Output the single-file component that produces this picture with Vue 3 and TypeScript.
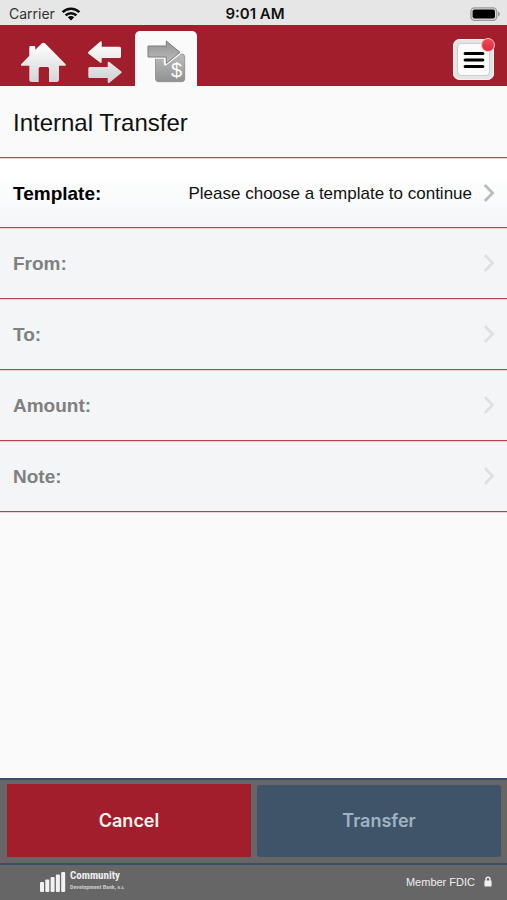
<script setup lang="ts">
interface Field {
  id: string
  label: string
  value: string
  enabled: boolean
}

const fields: Field[] = [
  { id: 'template', label: 'Template:', value: 'Please choose a template to continue', enabled: true },
  { id: 'from', label: 'From:', value: '', enabled: false },
  { id: 'to', label: 'To:', value: '', enabled: false },
  { id: 'amount', label: 'Amount:', value: '', enabled: false },
  { id: 'note', label: 'Note:', value: '', enabled: false },
]
</script>

<template>
  <div class="screen">
    <div class="status">
      <div class="carrier">
        <span>Carrier</span>
        <svg width="20" height="14" viewBox="0 0 20 14" aria-hidden="true">
          <g fill="none" stroke="#0a0a0a" stroke-width="2.5">
            <path d="M1.6 5.2a12 12 0 0 1 16.8 0" />
            <path d="M4.6 8.4a7.7 7.7 0 0 1 10.8 0" />
          </g>
          <path d="M10 13.6 6.8 10.3a4.6 4.6 0 0 1 6.4 0z" fill="#0a0a0a" />
        </svg>
      </div>
      <div class="time">9:01 AM</div>
      <div class="battery">
        <svg width="31" height="14" viewBox="0 0 31 14" aria-hidden="true">
          <rect x="0.9" y="0.9" width="25.8" height="12.4" rx="3.6" fill="#dcdcdc" stroke="#9b9b9b" stroke-width="1.3" />
          <rect x="2.6" y="2.6" width="22.4" height="9" rx="2" fill="#000" />
          <path d="M28 4.8c2.6.6 2.6 4 0 4.6z" fill="#9b9b9b" />
        </svg>
      </div>
    </div>

    <header class="topbar">
      <nav class="tabs">
        <button class="tab" type="button" aria-label="Home">
          <svg width="61" height="55" viewBox="0 0 61 55">
            <defs>
              <linearGradient id="homeFill" x1="0" y1="0" x2="0" y2="1">
                <stop offset="0" stop-color="#fff" />
                <stop offset="1" stop-color="#d4d5d6" />
              </linearGradient>
            </defs>
            <path
              d="M28.6 12.6q1.8-1.6 3.6 0l20.2 20.3q1.4 1.8-.8 1.8H46v13.8q0 2.5-2.5 2.5H36V37.5q0-1.5-1.5-1.5h-7.300q-1.500 0-1.500 1.500V51h-6.900q-2.500 0-2.500-2.500V34.700H9.200q-2.200 0-.8-1.800l7.900-8.100v-8.600q0-1.200 1.200-1.200h3.600q1.200 0 1.200 1.200v2.600z"
              fill="url(#homeFill)"
            />
          </svg>
        </button>
        <button class="tab" type="button" aria-label="Transfers">
          <svg width="61" height="55" viewBox="0 0 61 55">
            <defs>
              <linearGradient id="swapFill" gradientUnits="userSpaceOnUse" x1="0" y1="10" x2="0" y2="52">
                <stop offset="0" stop-color="#fff" />
                <stop offset="1" stop-color="#d0d1d2" />
              </linearGradient>
            </defs>
            <g fill="url(#swapFill)">
              <path d="M14.200 20.900 26 10.700q1.700-1 1.700.8v4.200h17.800q1.500 0 1.500 1.500v8.300q0 1.500-1.500 1.500H27.700v3.800q0 1.800-1.700.8L14.200 22.400q-.8-.7 0-1.500z" />
              <path d="M47.300 40.600 35.400 31q-1.700-1-1.700.8V36H15.800q-1.500 0-1.500 1.500v8q0 1.500 1.500 1.500h17.900v4q0 1.800 1.700.8l11.900-9.700q.8-.7 0-1.500z" />
            </g>
          </svg>
        </button>
        <button class="tab active" type="button" aria-label="Internal transfer" aria-current="page">
          <svg width="62" height="55" viewBox="0 0 62 55">
            <defs>
              <linearGradient id="cardFill" x1="0" y1="0" x2="0" y2="1">
                <stop offset="0" stop-color="#bcbcbc" />
                <stop offset="1" stop-color="#919191" />
              </linearGradient>
              <linearGradient id="arrowFill" x1="0" y1="0" x2="0" y2="1">
                <stop offset="0" stop-color="#939393" />
                <stop offset="1" stop-color="#bdbdbd" />
              </linearGradient>
            </defs>
            <path d="M20.500 25v22.700q0 3 3 3h23.200q3 0 3-3V26q0-3-3-3H44z" fill="url(#cardFill)" stroke="#8a8a8a" stroke-width=".8" />
            <path
              d="M45.500 21.300 31 9v5.800H12.500v11.400h17.800V33z"
              fill="none" stroke="#fafafa" stroke-width="3" stroke-linejoin="round"
            />
            <path
              d="M45 21.300 31.300 10v5H13v11h18.300v6.500z"
              fill="url(#arrowFill)" stroke="#7d7d7d" stroke-width="1" stroke-linejoin="round"
            />
            <text x="41.500" y="46" class="dollar" text-anchor="middle">$</text>
          </svg>
        </button>
      </nav>
      <button class="menu" type="button" aria-label="Menu">
        <span class="menu-face">
          <svg width="22" height="20" viewBox="0 0 22 20">
            <path d="M2.200 3.500h17.600M2.200 10h17.600M2.200 16.500h17.600" stroke="#000" stroke-width="3.200" stroke-linecap="round" />
          </svg>
        </span>
        <span class="badge"></span>
      </button>
    </header>

    <main class="content">
      <h1 class="title">Internal Transfer</h1>
      <div class="rows">
        <button
          v-for="field in fields"
          :key="field.id"
          type="button"
          class="row"
          :disabled="!field.enabled"
        >
          <span class="label">{{ field.label }}</span>
          <span class="value">{{ field.value }}</span>
          <svg class="chevron" width="12" height="20" viewBox="0 0 12 20" aria-hidden="true">
            <path d="M1.800 2 9.600 10 1.800 18" fill="none" stroke="currentColor" stroke-width="2.800" />
          </svg>
        </button>
      </div>
    </main>

    <div class="actions">
      <button class="action cancel" type="button">Cancel</button>
      <button class="action transfer" type="button" disabled>Transfer</button>
    </div>

    <footer class="footer">
      <div class="brand">
        <svg width="26" height="20" viewBox="0 0 26 20" aria-hidden="true">
          <g fill="#f2f2f2">
            <rect x="0" y="10" width="4" height="10" rx="1" />
            <rect x="5.300" y="7.500" width="4" height="12.500" rx="1" />
            <rect x="10.600" y="5" width="4" height="15" rx="1" />
            <rect x="15.900" y="2.500" width="4" height="17.500" rx="1" />
            <rect x="21.200" y="0" width="4" height="20" rx="1" />
          </g>
        </svg>
        <div class="brand-text">
          <span class="brand-name">Community</span>
          <span class="brand-sub">Development Bank, <small>N.A.</small></span>
        </div>
      </div>
      <div class="member">
        <span>Member FDIC</span>
        <svg width="8" height="11" viewBox="0 0 8 11" aria-hidden="true">
          <path d="M2 5V3.200a2 2 0 0 1 4 0V5" fill="none" stroke="#f0f0f0" stroke-width="1.400" />
          <rect x="0.400" y="4.600" width="7.200" height="6" rx="1" fill="#f0f0f0" />
        </svg>
      </div>
    </footer>
  </div>
</template>

<style>
body {
  margin: 0;
  background: #fafafa;
}
</style>

<style scoped>
.screen {
  display: flex;
  flex-direction: column;
  min-height: 100vh;
  background: #fafafa;
  color: #111;
  font-family: "Liberation Sans", Arial, sans-serif;
}

button {
  margin: 0;
  padding: 0;
  border: 0;
  background: none;
  color: inherit;
  font-family: inherit;
}

svg {
  display: block;
}

.status {
  display: grid;
  grid-template-columns: 1fr auto 1fr;
  align-items: center;
  height: 25px;
  padding: 2px 6px 0 9px;
  box-sizing: border-box;
  background: #e6e6e6;
  font-family: Inter, sans-serif;
  font-size: 14px;
  line-height: 20px;
}

.carrier {
  display: flex;
  align-items: center;
  gap: 6px;
  color: #333;
}

.time {
  color: #111;
  font-size: 15px;
  font-weight: 600;
}

.battery {
  display: flex;
  justify-content: flex-end;
}

.topbar {
  display: flex;
  justify-content: space-between;
  align-items: flex-end;
  height: 61px;
  padding: 0 13px;
  background: #a31e2d;
}

.tabs {
  display: flex;
}

.tab {
  border-radius: 5px 5px 0 0;
}

.tab.active {
  background: #fafafa;
}

.dollar {
  fill: #fff;
  font: 20px "Liberation Sans", Arial, sans-serif;
}

.menu {
  position: relative;
  width: 41px;
  height: 41px;
  margin-bottom: 6px;
  padding: 4px;
  border-radius: 7px;
  background: #e4e4e2;
  box-shadow: inset 0 0 0 1px #f4f4f4;
}

.menu-face {
  display: flex;
  align-items: center;
  justify-content: center;
  height: 33px;
  border: 1px solid #cfcfcf;
  border-radius: 4px;
  box-sizing: border-box;
  background: #fbfbfb;
}

.badge {
  position: absolute;
  top: -1px;
  right: -1px;
  width: 12px;
  height: 12px;
  border: 1px solid #f8b8bd;
  border-radius: 50%;
  background: linear-gradient(#f04a55, #dc2b3c);
}

.content {
  flex: 1;
}

.title {
  margin: 0;
  padding: 0 13px;
  border-bottom: 1px solid #b8434f;
  font-size: 24px;
  font-weight: 400;
  height: 71px;
  line-height: 74px;
}

.rows {
  box-shadow: 0 1px #eed3d6;
}

.row {
  display: flex;
  align-items: center;
  width: 100%;
  height: 71px;
  padding: 2px 12px 0 13px;
  border-bottom: 1px solid #b8434f;
  box-sizing: border-box;
  background: linear-gradient(#fff 20%, #f4f6f7);
  box-shadow: inset 0 1px #eed3d6;
  color: #111;
  text-align: left;
}

.row:first-child {
  height: 70px;
}

.row:disabled {
  background: #f4f5f7;
  color: #808080;
}

.label {
  color: inherit;
  font-size: 19px;
  font-weight: 700;
  line-height: 24px;
}

.row:enabled .label {
  color: #000;
}

.value {
  flex: 1;
  text-align: right;
  font-size: 17px;
  line-height: 24px;
}

.chevron {
  margin: 0 0 2px 11px;
  color: #bcbcbc;
}

.row:disabled .chevron {
  color: #dfe0e1;
}

.actions {
  display: grid;
  grid-template-columns: 1fr 1fr;
  gap: 6px;
  padding: 4px 6px 6px 7px;
  border-top: 2px solid #34506b;
  border-bottom: 2px solid #34506b;
  background: #666;
}

.action {
  height: 73px;
  font-family: Inter, sans-serif;
  font-size: 18px;
  font-weight: 600;
  line-height: 24px;
}

.cancel {
  background: #a31e2d;
  color: #fff3ee;
}

.transfer {
  border-top: 1px solid #666;
  border-radius: 3px;
  background: #3f5468;
  background-clip: padding-box;
  color: #9fb3c4;
}

.footer {
  display: flex;
  align-items: center;
  justify-content: space-between;
  height: 35px;
  padding: 0 15px 2px 40px;
  box-sizing: border-box;
  background: #666;
  color: #efefef;
}

.brand {
  display: flex;
  align-items: center;
  gap: 4px;
}

.brand-text {
  display: flex;
  flex-direction: column;
  font-family: "Liberation Sans Narrow", "Roboto Condensed", Roboto, sans-serif;
  font-weight: 700;
}

.brand-name {
  font-size: 11px;
  line-height: 12px;
}

.brand-sub {
  color: #c9c9c9;
  font-size: 6px;
  line-height: 10px;
}

.brand-sub small {
  font-size: 4px;
}

.member {
  display: flex;
  align-items: center;
  gap: 9px;
  font-size: 11px;
  line-height: 14px;
}
</style>
